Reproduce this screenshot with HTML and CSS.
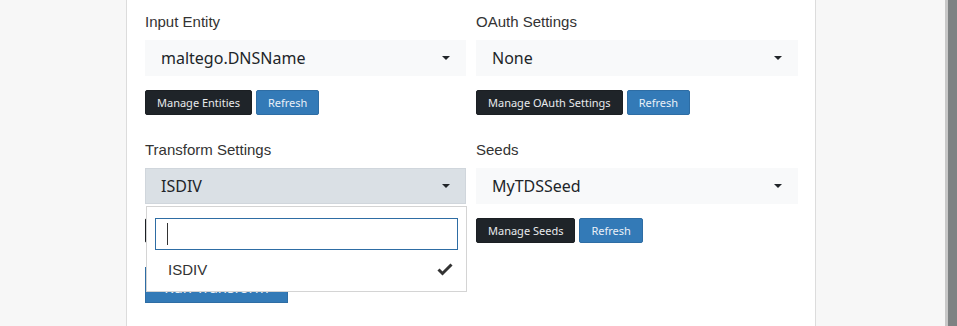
FILE: index.html
```html
<!DOCTYPE html>
<html lang="en">
<head>
    <meta charset="UTF-8">
    <meta name="viewport" content="width=device-width, initial-scale=1.0">
    <title>Transform Runner</title>
    <link rel="stylesheet" href="styles.css">
</head>
<body>
    <div class="page">
        <div class="panel">
            <div class="form-grid">
                <div class="field">
                    <label class="field-label">Input Entity</label>
                    <div class="select">
                        <span class="select-value">maltego.DNSName</span>
                        <span class="caret"></span>
                    </div>
                    <div class="btn-row">
                        <button class="btn btn-dark">Manage Entities</button>
                        <button class="btn btn-blue">Refresh</button>
                    </div>
                </div>

                <div class="field">
                    <label class="field-label">OAuth Settings</label>
                    <div class="select">
                        <span class="select-value">None</span>
                        <span class="caret"></span>
                    </div>
                    <div class="btn-row">
                        <button class="btn btn-dark">Manage OAuth Settings</button>
                        <button class="btn btn-blue">Refresh</button>
                    </div>
                </div>

                <div class="field">
                    <label class="field-label">Transform Settings</label>
                    <div class="select-wrap">
                        <div class="select is-open">
                            <span class="select-value">ISDIV</span>
                            <span class="caret"></span>
                        </div>
                        <div class="dropdown">
                            <div class="dropdown-search"><span class="text-caret"></span></div>
                            <div class="dropdown-option">
                                <span>ISDIV</span>
                                <svg class="check" width="16" height="13" viewBox="0 0 16 13">
                                    <path d="M1.5 6.5 L5.5 10.5 L14.5 1.5" fill="none" stroke="#333" stroke-width="3"/>
                                </svg>
                            </div>
                        </div>
                    </div>
                    <div class="btn-row">
                        <button class="btn btn-dark">Manage Transform Settings</button>
                        <button class="btn btn-blue">Refresh</button>
                    </div>
                </div>

                <div class="field">
                    <label class="field-label">Seeds</label>
                    <div class="select">
                        <span class="select-value">MyTDSSeed</span>
                        <span class="caret"></span>
                    </div>
                    <div class="btn-row">
                        <button class="btn btn-dark">Manage Seeds</button>
                        <button class="btn btn-blue">Refresh</button>
                    </div>
                </div>
            </div>

            <button class="btn btn-blue btn-lg">Run Transform</button>
        </div>
    </div>
    <div class="scrollbar">
        <div class="scroll-edge"></div>
        <div class="scroll-thumb"></div>
    </div>
</body>
</html>
```

FILE: styles.css
```css
* {
    margin: 0;
    padding: 0;
    box-sizing: border-box;
}

body {
    height: 326px;
    display: flex;
    background: #f7f7f7;
    overflow: hidden;
    font-family: 'Liberation Sans', Arial, sans-serif;
}

.page {
    flex: 1;
}

.panel {
    margin-left: 126px;
    width: 690px;
    height: 326px;
    background: #fff;
    border-left: 1px solid #dcdcdc;
    border-right: 1px solid #dcdcdc;
    padding: 11px 16px 0 18px;
}

.form-grid {
    display: grid;
    grid-template-columns: 321px 322px;
    column-gap: 10px;
    row-gap: 24px;
}

.field-label {
    display: block;
    color: #333;
    font-size: 15px;
    line-height: 21px;
    margin-bottom: 8px;
}

.select-wrap {
    position: relative;
}

.select {
    height: 36px;
    display: flex;
    align-items: center;
    justify-content: space-between;
    padding: 0 16px;
    background: #f8f9fa;
    color: #212529;
    font-family: 'Noto Sans', sans-serif;
    font-size: 16px;
}

.select.is-open {
    background: #dae0e5;
    border: 1px solid #d0d6dc;
    padding: 0 15px;
}

.caret {
    width: 0;
    height: 0;
    border-left: 4px solid transparent;
    border-right: 4px solid transparent;
    border-top: 4px solid #212529;
}

.btn-row {
    display: flex;
    gap: 4px;
    margin-top: 14px;
}

.btn {
    height: 25px;
    padding: 0 11px;
    border: 1px solid;
    border-radius: 2px;
    font-family: 'Noto Sans', sans-serif;
    font-size: 11px;
    line-height: 23px;
    cursor: pointer;
}

.btn-dark {
    background: #1f2429;
    border-color: #1b1f23;
    color: #e8eaec;
}

.btn-blue {
    background: #337ab7;
    border-color: #2e6da4;
    color: #e9f0f7;
}

.btn-lg {
    margin-top: 24px;
    height: 36px;
    width: 143px;
    padding: 4px 0 0;
    border-radius: 0;
    font-size: 15px;
    line-height: 30px;
}

.dropdown {
    position: absolute;
    top: calc(100% + 2px);
    left: 1px;
    right: -1px;
    height: 86px;
    background: #fff;
    border: 1px solid #d4d4d4;
    padding: 11px 8px 0;
    z-index: 2;
}

.dropdown-search {
    height: 32px;
    border: 1px solid #2e6da4;
    display: flex;
    align-items: center;
    padding-left: 11px;
}

.text-caret {
    width: 1px;
    height: 22px;
    background: #333;
}

.dropdown-option {
    height: 38px;
    display: flex;
    align-items: center;
    justify-content: space-between;
    padding: 0 5px 0 13px;
    color: #333;
    font-size: 15px;
}

.scrollbar {
    width: 12px;
    display: flex;
}

.scroll-edge {
    width: 3px;
    background: #c8c8c8;
}

.scroll-thumb {
    flex: 1;
    background: #7e8283;
}
```
